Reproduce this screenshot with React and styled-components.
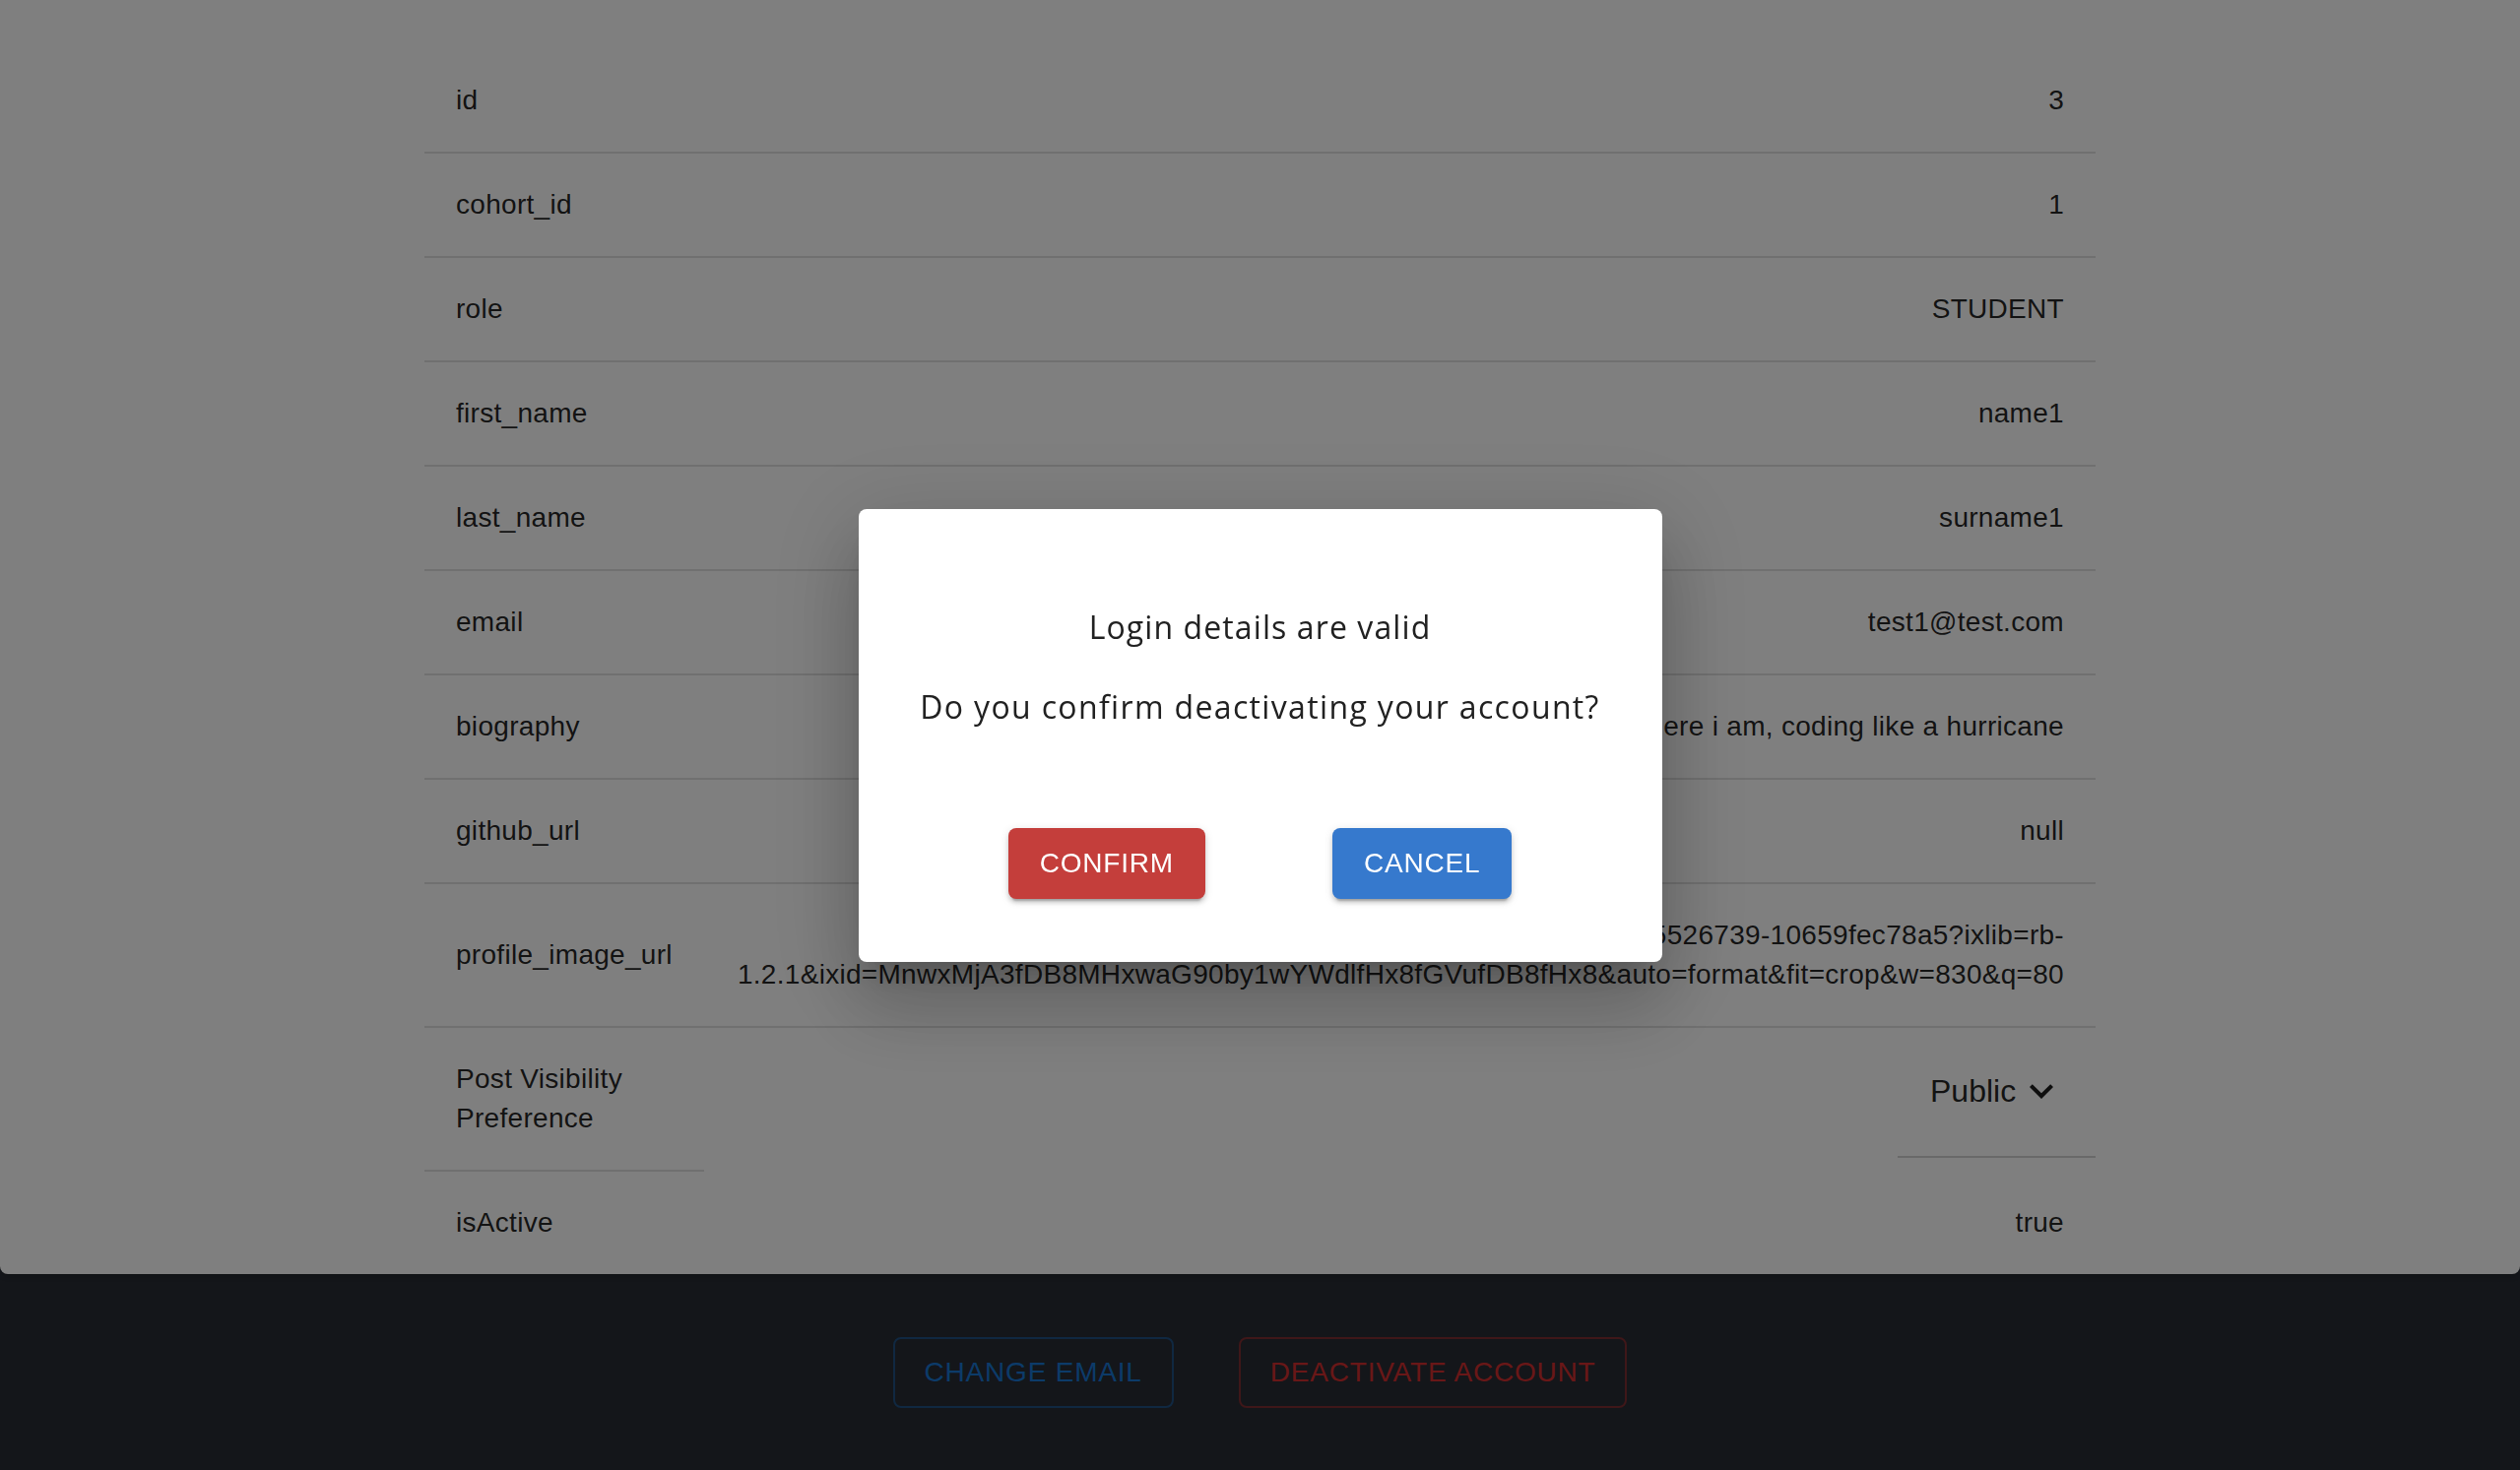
import React from "react";
import styled, { createGlobalStyle } from "styled-components";

const GlobalStyle = createGlobalStyle`
  html, body {
    margin: 0;
    padding: 0;
    background: #282c34;
    font-family: "Liberation Sans", Arial, sans-serif;
  }
  * { box-sizing: border-box; }
`;

const Page = styled.div`
  min-height: 100vh;
  background: #282c34;
`;

const Sheet = styled.section`
  background: #ffffff;
  padding-top: 50px;
  border-radius: 0 0 8px 8px;
  box-shadow: 0 4px 6px -2px rgba(0, 0, 0, 0.2);
`;

const DataTable = styled.table`
  width: 1697px;
  margin: 0 auto;
  border-collapse: collapse;
  table-layout: fixed;
  font-size: 28px;
  line-height: 40px;
  letter-spacing: 0.3px;
  color: rgba(0, 0, 0, 0.87);
`;

const Row = styled.tr`
  &:last-child th,
  &:last-child td {
    border-bottom: 0;
  }
`;

const KeyCell = styled.th`
  font-weight: 400;
  text-align: left;
  padding: 32px;
  border-bottom: 2px solid #e0e0e0;
  vertical-align: middle;
`;

const ValueCell = styled.td`
  text-align: right;
  padding: 32px;
  border-bottom: 2px solid #e0e0e0;
  vertical-align: middle;
`;

const SelectCell = styled.td`
  padding: 32px 0 0 0;
  vertical-align: top;
`;

const SelectField = styled.div`
  width: 201px;
  margin-left: auto;
  display: flex;
  align-items: center;
  padding: 8px 31px 42px 33px;
  border-bottom: 2px solid #d2d2d2;
  font-size: 32px;
  line-height: 46px;
  letter-spacing: 0;
  color: rgba(0, 0, 0, 0.87);
  cursor: pointer;
`;

const ChevronBox = styled.svg`
  width: 48px;
  height: 48px;
  margin-left: auto;
  flex: none;
  fill: #1c1c1c;
`;

const Actions = styled.div`
  display: flex;
  justify-content: center;
  gap: 66px;
  padding-top: 64px;
`;

const OutlineButton = styled.button`
  font-family: "Liberation Sans", Arial, sans-serif;
  font-size: 28px;
  line-height: 48px;
  letter-spacing: 0.8px;
  text-transform: uppercase;
  padding: 10px 30px;
  border-radius: 8px;
  background: transparent;
  color: ${(p) => (p.$tone === "error" ? "#d32f2f" : "#1976d2")};
  border: 2px solid
    ${(p) => (p.$tone === "error" ? "rgba(211,47,47,0.5)" : "rgba(25,118,210,0.5)")};
  cursor: pointer;
`;

const Backdrop = styled.div`
  position: fixed;
  inset: 0;
  background: rgba(0, 0, 0, 0.5);
`;

const Dialog = styled.div`
  position: fixed;
  top: 50%;
  left: 50%;
  transform: translate(-50%, -50%);
  width: 816px;
  background: #ffffff;
  border-radius: 8px;
  padding: 96px 0 64px;
  text-align: center;
  box-shadow: 0 22px 30px -14px rgba(0, 0, 0, 0.2),
    0 48px 76px 6px rgba(0, 0, 0, 0.14), 0 18px 92px 16px rgba(0, 0, 0, 0.12);
`;

const Message = styled.p`
  margin: ${(p) => (p.$spaced ? "33px 0 0" : "0")};
  font-family: "Open Sans", "Noto Sans", sans-serif;
  font-size: 32px;
  line-height: 48px;
  letter-spacing: ${(p) => (p.$spaced ? "1.35px" : "1.1px")};
  color: #212121;
`;

const DialogActions = styled.div`
  display: flex;
  justify-content: center;
  gap: 129px;
  margin-top: 99px;
`;

const SolidButton = styled.button`
  font-family: "Liberation Sans", Arial, sans-serif;
  font-size: 28px;
  line-height: 48px;
  letter-spacing: 0.8px;
  text-transform: uppercase;
  padding: 12px 32px;
  border: 0;
  border-radius: 8px;
  color: #ffffff;
  background: ${(p) => (p.$tone === "danger" ? "#c43e3b" : "#3679cd")};
  box-shadow: 0 6px 2px -4px rgba(0, 0, 0, 0.2), 0 4px 4px 0 rgba(0, 0, 0, 0.14),
    0 2px 10px 0 rgba(0, 0, 0, 0.12);
  cursor: pointer;
`;

const rows = [
  ["id", "3"],
  ["cohort_id", "1"],
  ["role", "STUDENT"],
  ["first_name", "name1"],
  ["last_name", "surname1"],
  ["email", "test1@test.com"],
  ["biography", "Here i am, coding like a hurricane"],
  ["github_url", "null"],
  [
    "profile_image_url",
    "https://images.unsplash.com/photo-1633455526739-10659fec78a5?ixlib=rb-1.2.1&ixid=MnwxMjA3fDB8MHxwaG90by1wYWdlfHx8fGVufDB8fHx8&auto=format&fit=crop&w=830&q=80",
  ],
];

export default function App() {
  return (
    <Page>
      <GlobalStyle />
      <Sheet>
        <DataTable>
          <colgroup>
            <col style={{ width: 284 }} />
            <col />
          </colgroup>
          <tbody>
            {rows.map(([k, v]) => (
              <Row key={k}>
                <KeyCell scope="row">{k}</KeyCell>
                <ValueCell>{v}</ValueCell>
              </Row>
            ))}
            <Row>
              <KeyCell scope="row">Post Visibility Preference</KeyCell>
              <SelectCell>
                <SelectField>
                  <span>Public</span>
                  <ChevronBox viewBox="0 0 24 24" aria-hidden="true">
                    <path d="M16.59 8.59 12 13.17 7.41 8.59 6 10l6 6 6-6z" />
                  </ChevronBox>
                </SelectField>
              </SelectCell>
            </Row>
            <Row>
              <KeyCell scope="row">isActive</KeyCell>
              <ValueCell>true</ValueCell>
            </Row>
          </tbody>
        </DataTable>
      </Sheet>
      <Actions>
        <OutlineButton $tone="primary">Change Email</OutlineButton>
        <OutlineButton $tone="error">Deactivate Account</OutlineButton>
      </Actions>
      <Backdrop />
      <Dialog role="dialog">
        <Message>Login details are valid</Message>
        <Message $spaced>Do you confirm deactivating your account?</Message>
        <DialogActions>
          <SolidButton $tone="danger">Confirm</SolidButton>
          <SolidButton $tone="primary">Cancel</SolidButton>
        </DialogActions>
      </Dialog>
    </Page>
  );
}
